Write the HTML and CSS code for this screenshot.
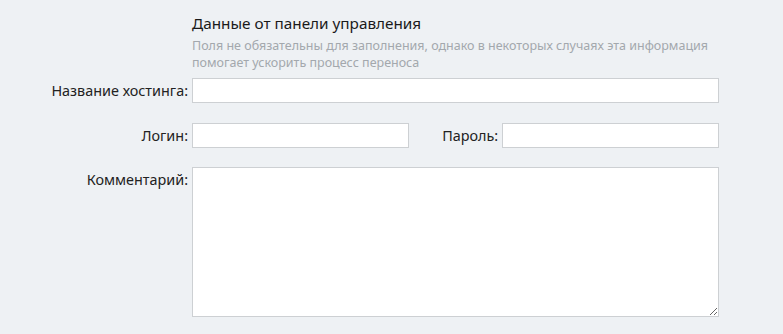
FILE: index.html
```html
<!DOCTYPE html>
<html lang="ru">
  <head>
    <meta charset="UTF-8" />
    <meta name="viewport" content="width=device-width, initial-scale=1.0" />
    <title>Перенос хостинга</title>
    <link rel="stylesheet" href="styles.css">
  </head>
  <body>
    <form class="panel-form">
      <div class="head">
        <h3>Данные от панели управления</h3>
        <p class="hint">
          Поля не обязательны для заполнения, однако в некоторых случаях эта информация
          помогает ускорить процесс переноса
        </p>
      </div>

      <label class="label" for="hosting">Название хостинга:</label>
      <input class="field" id="hosting" type="text">

      <label class="label" for="login">Логин:</label>
      <div class="pair">
        <input class="field" id="login" type="text">
        <label class="label inner" for="password">Пароль:</label>
        <input class="field" id="password" type="password">
      </div>

      <label class="label top" for="comment">Комментарий:</label>
      <textarea class="field comment" id="comment"></textarea>
    </form>
  </body>
</html>
```

FILE: styles.css
```css
body {
  margin: 0;
  background-color: #eef1f4;
  font-family: "Noto Sans", Arial, sans-serif;
  color: #222;
}

.panel-form {
  display: grid;
  grid-template-columns: 188px 527px;
  column-gap: 4px;
  row-gap: 20px;
  align-items: center;
  padding-top: 12px;
}

.head {
  grid-column: 2;
  margin-bottom: -13px;
}

.head h3 {
  margin: 0;
  font-size: 15.3px;
  font-weight: normal;
  line-height: 22px;
  color: #1a1a1a;
}

.hint {
  margin: 3px 0 0;
  font-size: 12.5px;
  line-height: 17px;
  color: #a3a8ad;
}

.label {
  text-align: right;
  font-size: 14.4px;
  white-space: nowrap;
}

.label.top {
  align-self: start;
  padding-top: 2px;
}

.field {
  box-sizing: border-box;
  height: 25px;
  margin: 0;
  border: 1px solid #cdd0d3;
  background: #fff;
  font: inherit;
}

.pair {
  display: flex;
  align-items: center;
}

.pair .field {
  width: 217px;
}

.pair .inner {
  flex: 1;
  padding-right: 4px;
}

.comment {
  height: 150px;
  resize: both;
  margin-top: -1px;
}
```
